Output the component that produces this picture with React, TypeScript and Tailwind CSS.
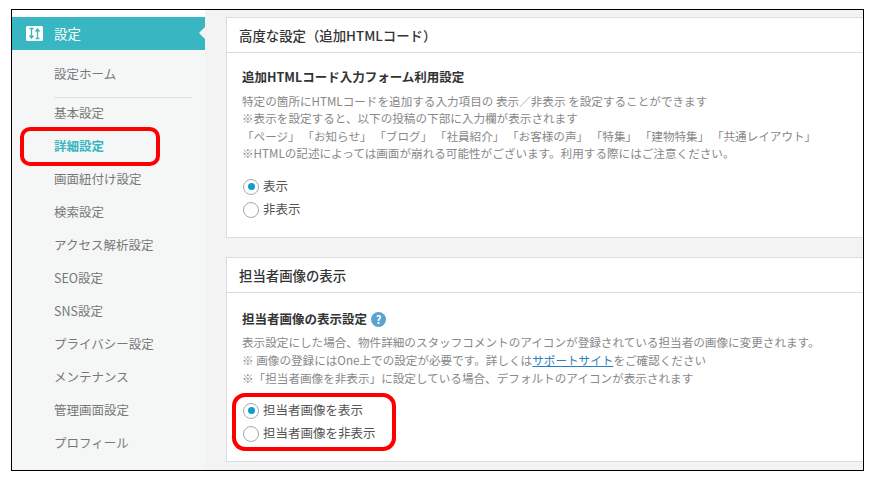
const font = "font-['Noto_Sans_CJK_JP','Noto_Sans',sans-serif] [text-spacing-trim:space-all]"

const menu = [
  { label: '基本設定' },
  { label: '詳細設定', active: true },
  { label: '画面紐付け設定' },
  { label: '検索設定' },
  { label: 'アクセス解析設定' },
  { label: 'SEO設定' },
  { label: 'SNS設定' },
  { label: 'プライバシー設定' },
  { label: 'メンテナンス' },
  { label: '管理画面設定' },
  { label: 'プロフィール' },
]

function Radio({ label, checked }: { label: string; checked?: boolean }) {
  return (
    <div className="flex h-[23px] items-center gap-[4px]">
      <span className="flex h-[16px] w-[16px] items-center justify-center rounded-full border border-[#a9a9a9] bg-white">
        {checked && <span className="h-[7px] w-[7px] rounded-full bg-[#0b9fcb]" />}
      </span>
      <span className="text-[12.5px] text-[#555]">{label}</span>
    </div>
  )
}

function Card({ title, height, children }: { title: string; height: string; children: React.ReactNode }) {
  return (
    <section className={`${height} border-y border-l border-[#dcdcdc] bg-white`}>
      <h2 className="flex h-[35px] items-center border-b border-[#dcdcdc] pl-[12px] text-[13.4px] font-medium text-[#333]">{title}</h2>
      {children}
    </section>
  )
}

export default function App() {
  return (
    <div className={`${font} relative h-[478px] w-[869px] overflow-hidden bg-white pl-[11px] pt-[9px]`}>
      <div className="flex h-[462px] w-[853px] overflow-hidden border-[1.5px] border-black bg-[#f3f3f3]">
        <aside className="h-full w-[192.500px] shrink-0 bg-[#f5f7f7]">
          <div className="h-[7px] bg-white" />
          <div className="relative flex h-[33px] items-center gap-[11px] bg-[#38b6c2] pl-[14px]">
            <svg width="17" height="15" viewBox="0 0 17 15">
              <rect width="17" height="15" rx="1.500" fill="#fff" />
              <path d="M5.500 3v8M3.500 9.500 5.500 12l2-2.500M3.500 2.500h4M11.500 12V4M9.500 5.500 11.500 3l2 2.500M9.500 12.500h4" fill="none" stroke="#38b6c2" strokeWidth="1.300" />
            </svg>
            <span className="text-[13.4px] text-white">設定</span>
            <span className="absolute right-0 top-[10px] h-0 w-0 border-y-[6px] border-r-[6px] border-y-transparent border-r-[#f3f3f3]" />
          </div>
          <div className="pl-[42px]">
            <div className="flex h-[47px] items-center pt-[2px] text-[12.5px] text-[#777]">設定ホーム</div>
            <div className="w-[138px] border-t border-[#e2e2e2]" />
            <ul className="-mt-[1px]">
              {menu.map((m) => (
                <li key={m.label} className={`flex h-[33px] items-center text-[12.5px] ${m.active ? 'font-bold text-[#38b6c2]' : 'text-[#777]'}`}>
                  {m.label}
                </li>
              ))}
            </ul>
          </div>
        </aside>
        <main className="flex min-w-0 flex-1 flex-col gap-[19px] pl-[21.500px] pt-[7px]">
          <Card title="高度な設定（追加HTMLコード）" height="h-[221px]">
            <div className="pl-[15px] pt-[14px]">
              <h3 className="text-[12.5px] font-bold leading-[20px] text-[#333]">追加HTMLコード入力フォーム利用設定</h3>
              <div className="mt-[6px] whitespace-nowrap text-[11.6px] leading-[17.300px] text-[#888]">
                <p>特定の箇所にHTMLコードを追加する入力項目の 表示／非表示 を設定することができます</p>
                <p>※表示を設定すると、以下の投稿の下部に入力欄が表示されます</p>
                <p>「ページ」 「お知らせ」 「ブログ」 「社員紹介」 「お客様の声」 「特集」 「建物特集」 「共通レイアウト」</p>
                <p>※HTMLの記述によっては画面が崩れる可能性がございます。利用する際にはご注意ください。</p>
              </div>
              <div className="mt-[13px] pl-[1px]">
                <Radio label="表示" checked />
                <Radio label="非表示" />
              </div>
            </div>
          </Card>
          <Card title="担当者画像の表示" height="h-[205px]">
            <div className="pl-[15px] pt-[16px]">
              <h3 className="flex items-center gap-[4px] text-[12.5px] font-bold leading-[20px] text-[#333]">
                担当者画像の表示設定
                <span className="flex h-[15px] w-[15px] items-center justify-center rounded-full bg-[#5aa2cf] text-[11px] font-bold text-white">?</span>
              </h3>
              <div className="mt-[4px] whitespace-nowrap text-[11.6px] leading-[18px] text-[#888]">
                <p>表示設定にした場合、物件詳細のスタッフコメントのアイコンが登録されている担当者の画像に変更されます。</p>
                <p>※ 画像の登録にはOne上での設定が必要です。詳しくは<span className="text-[#2a7fc0] underline">サポートサイト</span>をご確認ください</p>
                <p>※「担当者画像を非表示」に設定している場合、デフォルトのアイコンが表示されます</p>
              </div>
              <div className="mt-[12px] pl-[1px]">
                <Radio label="担当者画像を表示" checked />
                <Radio label="担当者画像を非表示" />
              </div>
            </div>
          </Card>
        </main>
      </div>
      <div className="absolute left-[20px] top-[127px] h-[39px] w-[140px] rounded-[10px] border-[4.500px] border-[#f00]" />
      <div className="absolute left-[232px] top-[393px] h-[58px] w-[164px] rounded-[13px] border-[4.500px] border-[#f00]" />
    </div>
  )
}
